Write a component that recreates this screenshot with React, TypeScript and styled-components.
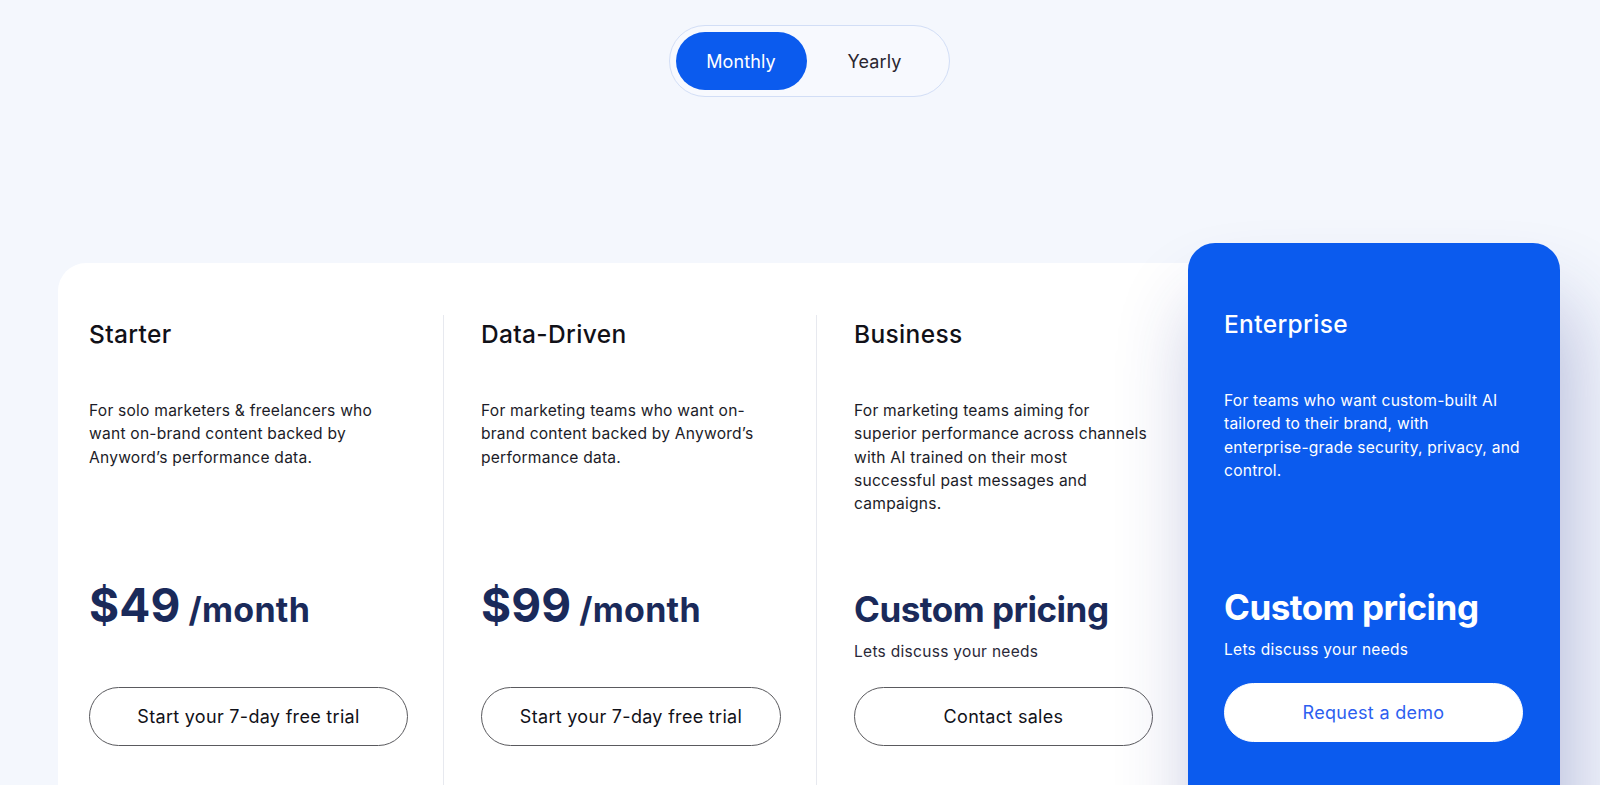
import React from "react";
import styled, { createGlobalStyle } from "styled-components";

const Global = createGlobalStyle`
  html, body {
    margin: 0;
    padding: 0;
    background: #f4f7fd;
    overflow: hidden;
  }
  body {
    font-family: Inter, "Noto Sans", "Liberation Sans", sans-serif;
    -webkit-font-smoothing: antialiased;
  }
  * { box-sizing: border-box; }
`;

const Page = styled.main`
  width: 1502px;
  margin-left: 58px;
  padding-top: 25px;
  height: 785px;
`;

const ToggleRow = styled.div`
  display: flex;
  justify-content: center;
`;

const Toggle = styled.div`
  display: flex;
  align-items: center;
  height: 72px;
  padding: 0 6px;
  border: 1px solid #d2def6;
  border-radius: 36px;
  background: #f7f9fe;
`;

const ToggleOption = styled.button<{ $active?: boolean; $width: number }>`
  width: ${(p) => p.$width}px;
  height: 58px;
  border: none;
  border-radius: 29px;
  background: ${(p) => (p.$active ? "#0b5bee" : "transparent")};
  color: ${(p) => (p.$active ? "#ffffff" : "#2a2630")};
  font-family: inherit;
  font-size: 18px;
  font-weight: 400;
  letter-spacing: 0.1px;
  cursor: pointer;
`;

const Plans = styled.section`
  display: flex;
  align-items: flex-start;
  margin-top: 146px;
`;

const Panel = styled.div`
  display: grid;
  grid-template-columns: 385px 373px 372px;
  width: 1130px;
  margin-top: 20px;
  padding-top: 52px;
  min-height: 600px;
  background: #ffffff;
  border-radius: 28px 0 0 0;
`;

const Column = styled.div<{ $first?: boolean }>`
  display: flex;
  flex-direction: column;
  padding: 0 35px 0 ${(p) => (p.$first ? 31 : 37)}px;
  border-left: ${(p) => (p.$first ? "none" : "1px solid #e7e9ef")};
  min-height: 560px;
`;

const Featured = styled.div`
  display: flex;
  flex-direction: column;
  position: relative;
  z-index: 1;
  width: 372px;
  min-height: 620px;
  padding: 66px 37px 0 36px;
  background: #0b5bee;
  border-radius: 27px 27px 0 0;
  box-shadow: 10px 60px 80px rgba(40, 50, 140, 0.3);
`;

const Title = styled.h2<{ $light?: boolean }>`
  margin: ${(p) => (p.$light ? 0 : 4)}px 0 0;
  font-size: 24.5px;
  line-height: 30px;
  font-weight: 500;
  letter-spacing: 0.35px;
  color: ${(p) => (p.$light ? "#ffffff" : "#111118")};
`;

const Description = styled.p<{ $light?: boolean }>`
  margin: 50px 0 0;
  height: ${(p) => (p.$light ? 191 : 183)}px;
  font-size: 15.6px;
  line-height: 23.3px;
  letter-spacing: 0.22px;
  color: ${(p) => (p.$light ? "#ffffff" : "#1c1c28")};
`;

const NoBreak = styled.span`
  white-space: nowrap;
`;

const PriceArea = styled.div<{ $light?: boolean }>`
  height: ${(p) => (p.$light ? 103 : 105)}px;
`;

const Price = styled.div<{ $light?: boolean; $size: number; $tight?: boolean }>`
  font-size: ${(p) => p.$size}px;
  line-height: ${(p) => 2 * (40 - 0.364 * p.$size)}px;
  font-weight: 700;
  letter-spacing: ${(p) => (p.$tight ? -0.5 : 0.1)}px;
  color: ${(p) => (p.$light ? "#ffffff" : "#1a2a5a")};
  white-space: nowrap;
`;

const Per = styled.span`
  font-size: 34px;
  margin-left: 8px;
  letter-spacing: 0.3px;
`;

const Note = styled.div<{ $light?: boolean }>`
  margin-top: 5px;
  font-size: 15.5px;
  line-height: 20px;
  letter-spacing: 0.3px;
  color: ${(p) => (p.$light ? "#ffffff" : "#2a2838")};
`;

const CTA = styled.a<{ $light?: boolean }>`
  display: flex;
  align-items: center;
  justify-content: center;
  height: 59px;
  border-radius: 30px;
  border: 1px solid ${(p) => (p.$light ? "#ffffff" : "#5a5a5e")};
  background: ${(p) => (p.$light ? "#ffffff" : "transparent")};
  color: ${(p) => (p.$light ? "#2d5ff0" : "#111118")};
  font-size: 18px;
  letter-spacing: 0.3px;
  text-decoration: none;
  cursor: pointer;
`;

type Plan = {
  name: string;
  desc: string;
  price?: string;
  custom?: boolean;
  cta: string;
};

const plans: Plan[] = [
  {
    name: "Starter",
    desc: "For solo marketers & freelancers who want on-brand content backed by Anyword’s performance data.",
    price: "$49",
    cta: "Start your 7-day free trial",
  },
  {
    name: "Data-Driven",
    desc: "For marketing teams who want on-brand content backed by Anyword’s performance data.",
    price: "$99",
    cta: "Start your 7-day free trial",
  },
  {
    name: "Business",
    desc: "For marketing teams aiming for superior performance across channels with AI trained on their most successful past messages and campaigns.",
    custom: true,
    cta: "Contact sales",
  },
];

export default function App() {
  return (
    <>
      <Global />
      <Page>
        <ToggleRow>
          <Toggle>
            <ToggleOption $active $width={131}>Monthly</ToggleOption>
            <ToggleOption $width={136}>Yearly</ToggleOption>
          </Toggle>
        </ToggleRow>
        <Plans>
          <Panel>
            {plans.map((p, i) => (
              <Column key={p.name} $first={i === 0}>
                <Title>{p.name}</Title>
                <Description>{p.desc}</Description>
                <PriceArea>
                  {p.custom ? (
                    <>
                      <Price $size={35} $tight>Custom pricing</Price>
                      <Note>Lets discuss your needs</Note>
                    </>
                  ) : (
                    <Price $size={46}>
                      {p.price}
                      <Per>/month</Per>
                    </Price>
                  )}
                </PriceArea>
                <CTA>{p.cta}</CTA>
              </Column>
            ))}
          </Panel>
          <Featured>
            <Title $light>Enterprise</Title>
            <Description $light>
              For teams who want custom-built AI tailored to their brand, with{" "}
              <NoBreak>enterprise-grade</NoBreak> security, privacy, and control.
            </Description>
            <PriceArea $light>
              <Price $light $size={35} $tight>Custom pricing</Price>
              <Note $light>Lets discuss your needs</Note>
            </PriceArea>
            <CTA $light>Request a demo</CTA>
          </Featured>
        </Plans>
      </Page>
    </>
  );
}
